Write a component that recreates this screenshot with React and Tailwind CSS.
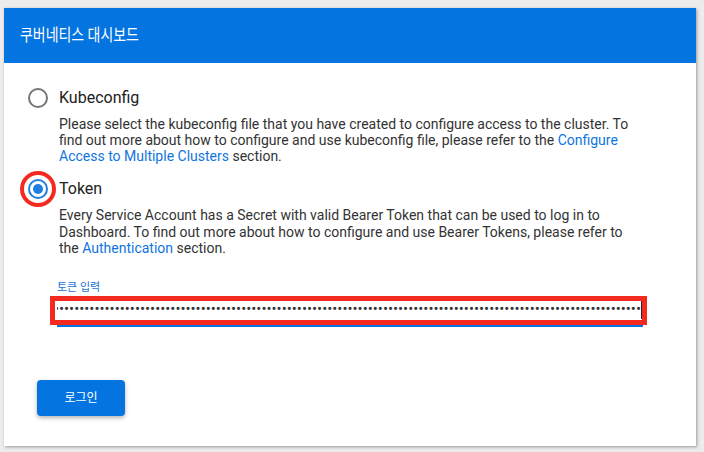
const dots = "•".repeat(122);

export default function App() {
  return (
    <div
      className="min-h-screen bg-[#ececec] pt-2 pl-1"
      style={{ fontFamily: "Roboto, 'Noto Sans CJK KR', sans-serif" }}
    >
      <div className="w-[692px] h-[438px] bg-white shadow-[1px_1px_3px_rgba(0,0,0,0.35)] flex flex-col">
        {/* Header */}
        <div className="h-[55px] bg-[#0374e0] px-4 flex items-center">
          <h1 className="inline-block origin-left scale-x-[0.82] text-white text-[17px] font-normal whitespace-nowrap">
            쿠버네티스 대시보드
          </h1>
        </div>

        {/* Body */}
        <div className="pl-[24px] flex flex-col relative">
          {/* Kubeconfig */}
          <div className="mt-[25px] flex items-center h-5">
            <div className="w-5 h-5 rounded-full border-2 border-[#757575]" />
            <span className="ml-[11px] text-[16px] text-[#212121]">Kubeconfig</span>
          </div>
          <p className="mt-2 ml-[31px] w-[584px] text-[14px] leading-4 text-[#333]">
            Please select the kubeconfig file that you have created to configure access to the cluster. To
            find out more about how to configure and use kubeconfig file, please refer to the{" "}
            <span className="text-[#0f75de]">Configure Access to Multiple Clusters</span> section.
          </p>

          {/* Token */}
          <div className="mt-[15px] flex items-center h-5 relative">
            <div className="w-5 h-5 rounded-full border-2 border-[#1e7fe0] flex items-center justify-center">
              <div className="w-[10px] h-[10px] rounded-full bg-[#1e7fe0]" />
            </div>
            <span className="ml-[11px] text-[16px] text-[#212121]">Token</span>
            <div className="absolute left-[-8px] top-[-8px] w-9 h-9 rounded-full border-4 border-[#f52a1f]" />
          </div>
          <p className="mt-2 ml-[31px] w-[584px] text-[14px] leading-[16.5px] text-[#333]">
            Every Service Account has a Secret with valid Bearer Token that can be used to log in to
            Dashboard. To find out more about how to configure and use Bearer Tokens, please refer to
            the <span className="text-[#0f75de]">Authentication</span> section.
          </p>

          {/* Token input */}
          <label className="mt-[24px] ml-[29px] text-[11px] leading-[14px] text-[#1a73d9]">토큰 입력</label>
          <div className="ml-[29px] w-[586px] h-[32px] border-b-2 border-[#0374e0] flex items-center relative">
            <div className="flex-1 flex justify-end overflow-hidden whitespace-nowrap pl-[3px] text-[15px] text-[#333] leading-none">
              <span>{dots}</span>
            </div>
            <div className="w-px h-[19px] bg-[#222] mr-[1px]" />
            <div className="absolute left-[-7px] top-[1px] w-[597px] h-[29px] border-[5px] border-[#f52a1f]" />
          </div>

          {/* Login button */}
          <button className="mt-[53px] ml-[9px] w-[88px] h-9 bg-[#0374e0] text-white text-[12px] rounded-sm shadow-[0_2px_4px_rgba(0,0,0,0.3)] self-start">
            로그인
          </button>
        </div>
      </div>
    </div>
  );
}
